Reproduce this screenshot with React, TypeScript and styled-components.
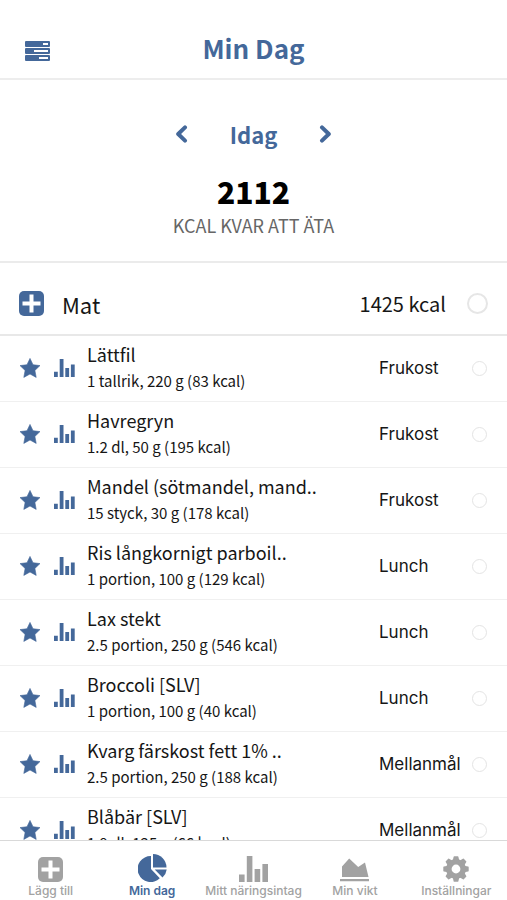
import { useState } from 'react';
import styled, { createGlobalStyle } from 'styled-components';

const BLUE = '#44689a';
const GREY = '#a2a2a2';
const SOURCE = '"Noto Sans CJK SC", "Noto Sans", sans-serif';
const SYSTEM = 'Inter, "Liberation Sans", sans-serif';

const GlobalStyle = createGlobalStyle`
  *, *::before, *::after { box-sizing: border-box; }
  body { margin: 0; background: #fff; color: #161616; font-family: ${SOURCE}; }
  button, input { font: inherit; color: inherit; margin: 0; }
  h1, h2, p, ul { margin: 0; padding: 0; }
`;

const Screen = styled.div`
  display: flex;
  flex-direction: column;
  height: 100vh;
`;

const IconButton = styled.button`
  display: flex;
  align-items: center;
  justify-content: center;
  padding: 0;
  border: 0;
  background: none;
  color: ${BLUE};
  cursor: pointer;
`;

const Header = styled.header`
  display: grid;
  flex: none;
  grid-template-columns: 1fr auto 1fr;
  align-items: center;
  padding: 18px 24px 0;
  height: 80px;
  border-bottom: 2px solid #ededed;
`;

const MenuButton = styled(IconButton)`
  justify-self: start;
  padding: 6px 0 0 1px;
`;

const Title = styled.h1`
  color: ${BLUE};
  font-size: 26px;
  line-height: 36px;
  font-weight: 700;
`;

const Summary = styled.section`
  display: flex;
  flex: none;
  flex-direction: column;
  align-items: center;
  padding: 36px 24px 22px;
  border-bottom: 2px solid #ebebeb;
`;

const DayPicker = styled.div`
  display: flex;
  align-items: center;
  gap: 41px;
  margin-bottom: 19px;
`;

const DayName = styled.h2`
  color: ${BLUE};
  font-size: 22px;
  line-height: 36px;
  font-weight: 700;
`;

const Remaining = styled.p`
  color: #000;
  font-size: 30px;
  line-height: 40px;
  font-weight: 800;
`;

const RemainingLabel = styled.p`
  color: #666;
  font-size: 18px;
  line-height: 28px;
`;

const GroupHeader = styled.div`
  display: flex;
  flex: none;
  align-items: center;
  height: 73px;
  padding: 10px 19px 0;
  border-bottom: 2px solid #e8e8e8;
`;

const GroupName = styled.h2`
  flex: 1;
  margin-left: 18px;
  font-size: 22px;
  line-height: 32px;
  font-weight: 400;
`;

const GroupTotal = styled.span`
  margin-right: 21px;
  font-size: 20px;
  line-height: 32px;
`;

const Tick = styled.input<{ $large?: boolean }>`
  appearance: none;
  flex: none;
  width: ${(p) => (p.$large ? 21 : 15)}px;
  height: ${(p) => (p.$large ? 21 : 15)}px;
  border: ${(p) => (p.$large ? '2px solid #e6e6e6' : '1px solid #e4e4e4')};
  border-radius: 50%;
  cursor: pointer;
  &:checked { background: ${BLUE}; border-color: ${BLUE}; }
`;

const FoodList = styled.ul`
  flex: 1;
  min-height: 0;
  overflow-y: auto;
  list-style: none;
  scrollbar-width: none;
`;

const FoodRow = styled.li`
  display: flex;
  align-items: center;
  height: 66px;
  padding: 0 20px 1px 19px;
  border-bottom: 1px solid #f0f0f0;
`;

const RowIcons = styled.div`
  display: flex;
  align-items: center;
  gap: 13px;
  margin-right: 12px;
`;

const FoodText = styled.div`
  flex: 1;
  min-width: 0;
  padding-bottom: 2px;
  white-space: nowrap;
`;

const FoodName = styled.p`
  font-size: 18px;
  line-height: 28px;
`;

const FoodAmount = styled.p`
  font-size: 15px;
  line-height: 26px;
`;

const Meal = styled.label`
  width: 93px;
  font-family: ${SYSTEM};
  font-size: 17px;
  line-height: 24px;
  cursor: pointer;
`;

const TabBar = styled.nav`
  display: flex;
  flex: none;
  height: 60px;
  border-top: 1px solid #d9d9d9;
`;

const Tab = styled.a<{ $active: boolean }>`
  display: flex;
  flex: 1 1 0;
  min-width: 0;
  flex-direction: column;
  align-items: center;
  padding-top: 12px;
  gap: 1px;
  color: ${(p) => (p.$active ? BLUE : GREY)};
  font-family: ${SYSTEM};
  font-size: 12px;
  line-height: 16px;
  font-weight: ${(p) => (p.$active ? 600 : 500)};
  white-space: nowrap;
  text-decoration: none;
`;

const TabIcon = styled.span`
  display: flex;
  align-items: flex-end;
  height: 29px;
`;

const TasksIcon = () => (
  <svg width="25" height="20" viewBox="0 0 25 20" fill="currentColor" aria-hidden="true">
    <path fillRule="evenodd" d="M1 0h23a1 1 0 0 1 1 1v4a1 1 0 0 1-1 1H1a1 1 0 0 1-1-1V1a1 1 0 0 1 1-1zm17 2v2h5V2zM1 7h23a1 1 0 0 1 1 1v4a1 1 0 0 1-1 1H1a1 1 0 0 1-1-1V8a1 1 0 0 1 1-1zm8 2v2h14V9zM1 14h23a1 1 0 0 1 1 1v4a1 1 0 0 1-1 1H1a1 1 0 0 1-1-1v-4a1 1 0 0 1 1-1zm13 2v2h9v-2z" />
  </svg>
);

const Chevron = ({ right = false }: { right?: boolean }) => (
  <svg width="14" height="18" viewBox="0 0 14 18" fill="none" stroke="currentColor" strokeWidth="4" strokeLinejoin="round" strokeLinecap="round" aria-hidden="true">
    <path d={right ? 'M4 2.400 10.800 9 4 15.600' : 'M10 2.400 3.200 9l6.800 6.600'} />
  </svg>
);

const PlusSquare = () => (
  <svg width="25" height="25" viewBox="0 0 25 25" aria-hidden="true">
    <rect width="25" height="25" rx="5" fill="currentColor" />
    <path d="M12.500 5.500v14M5.500 12.500h14" stroke="#fff" strokeWidth="4" strokeLinecap="square" strokeLinejoin="round" />
  </svg>
);

const StarIcon = () => (
  <svg width="22" height="20" viewBox="0 0 22 20" fill="currentColor" stroke="currentColor" strokeWidth=".6" strokeLinejoin="round" aria-hidden="true">
    <path d="M11 .4l3 6.300 7 .9-5.100 4.800 1.300 7L11 16l-6.200 3.400 1.300-7L1 7.600l7-.9z" />
  </svg>
);

const BarsIcon = ({ large = false }: { large?: boolean }) => (
  <svg width={large ? 29 : 21} height={large ? 26 : 18} viewBox={large ? '0 0 29 26' : '0 0 21 18'} fill="currentColor" aria-hidden="true">
    <path d={large ? 'M0 18.500h5.600V26H0zM7.800 0h5.600v26H7.800zM15.600 13h5.600v13h-5.600zM23.400 8H29v18h-5.600z' : 'M0 12.800h3.800V18H0zM5.700 0h3.800v18H5.700zM11.300 9h3.800v9h-3.800zM16.900 5.500h3.800V18h-3.800z'} />
  </svg>
);

const PieIcon = () => (
  <svg width="29" height="28" viewBox="0 0 29 28" fill="currentColor" aria-hidden="true">
    <path d="M13 2v13l8.800 9.200A13 13 0 1 1 13 2z" />
    <path d="M15 0a13.500 13.500 0 0 1 13.500 13.500H15z" />
    <path d="M16.700 15.500h12a13 13 0 0 1-4.200 8z" />
  </svg>
);

const AreaIcon = () => (
  <svg width="29" height="24" viewBox="0 0 29 24" fill="currentColor" aria-hidden="true">
    <path d="M2 19V8.500L9.200.5l9 8.500L25 4.500 28.500 19zM0 21h29v2.200H0z" />
  </svg>
);

const GearIcon = () => (
  <svg width="26" height="26" viewBox="-13 -13 26 26" fill="none" stroke="currentColor" aria-hidden="true">
    <circle r="7.200" strokeWidth="5.600" />
    <g fill="currentColor" strokeWidth="1.400" strokeLinejoin="round">
      {[0, 45, 90, 135, 180, 225, 270, 315].map((a) => (
        <path key={a} transform={`rotate(${a})`} d="M-2.400-9-1.700-12h3.400L2.400-9z" />
      ))}
    </g>
  </svg>
);

const foods = [
  ['Lättfil', '1 tallrik, 220 g (83 kcal)', 'Frukost'],
  ['Havregryn', '1.2 dl, 50 g (195 kcal)', 'Frukost'],
  ['Mandel (sötmandel, mand..', '15 styck, 30 g (178 kcal)', 'Frukost'],
  ['Ris långkornigt parboil..', '1 portion, 100 g (129 kcal)', 'Lunch'],
  ['Lax stekt', '2.5 portion, 250 g (546 kcal)', 'Lunch'],
  ['Broccoli [SLV]', '1 portion, 100 g (40 kcal)', 'Lunch'],
  ['Kvarg färskost fett 1% ..', '2.5 portion, 250 g (188 kcal)', 'Mellanmål'],
  ['Blåbär [SLV]', '1.9 dl, 125 g (66 kcal)', 'Mellanmål'],
];

const tabs = [
  { name: 'Lägg till', icon: <PlusSquare /> },
  { name: 'Min dag', icon: <PieIcon /> },
  { name: 'Mitt näringsintag', icon: <BarsIcon large /> },
  { name: 'Min vikt', icon: <AreaIcon /> },
  { name: 'Inställningar', icon: <GearIcon /> },
];

export default function App() {
  const [active, setActive] = useState('Min dag');
  return (
    <Screen>
      <GlobalStyle />
      <Header>
        <MenuButton aria-label="Meny"><TasksIcon /></MenuButton>
        <Title>Min Dag</Title>
      </Header>
      <Summary>
        <DayPicker>
          <IconButton aria-label="Föregående dag"><Chevron /></IconButton>
          <DayName>Idag</DayName>
          <IconButton aria-label="Nästa dag"><Chevron right /></IconButton>
        </DayPicker>
        <Remaining>2112</Remaining>
        <RemainingLabel>KCAL KVAR ATT ÄTA</RemainingLabel>
      </Summary>
      <GroupHeader>
        <IconButton aria-label="Lägg till mat"><PlusSquare /></IconButton>
        <GroupName>Mat</GroupName>
        <GroupTotal>1425 kcal</GroupTotal>
        <Tick type="checkbox" $large aria-label="Markera alla" />
      </GroupHeader>
      <FoodList>
        {foods.map(([name, amount, meal], i) => (
          <FoodRow key={name}>
            <RowIcons>
              <IconButton aria-label="Favorit"><StarIcon /></IconButton>
              <IconButton aria-label="Näringsvärden"><BarsIcon /></IconButton>
            </RowIcons>
            <FoodText>
              <FoodName>{name}</FoodName>
              <FoodAmount>{amount}</FoodAmount>
            </FoodText>
            <Meal htmlFor={`food-${i}`}>{meal}</Meal>
            <Tick type="checkbox" id={`food-${i}`} />
          </FoodRow>
        ))}
      </FoodList>
      <TabBar>
        {tabs.map(({ name, icon }) => (
          <Tab key={name} href="#" $active={name === active} onClick={() => setActive(name)}>
            <TabIcon>{icon}</TabIcon>
            {name}
          </Tab>
        ))}
      </TabBar>
    </Screen>
  );
}
